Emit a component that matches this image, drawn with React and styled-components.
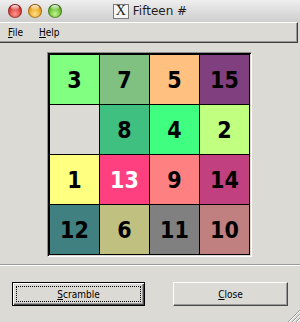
import React from 'react';
import styled, { createGlobalStyle } from 'styled-components';

const GlobalStyle = createGlobalStyle`
  html, body {
    margin: 0;
    padding: 0;
    background: #dcdad5;
  }
  body {
    font-family: "DejaVu Sans", sans-serif;
  }
`;

const gtkFont = `
  font-family: "DejaVu Sans Condensed", "DejaVu Sans", sans-serif;
  font-stretch: condensed;
  font-size: 10px;
`;

const Window = styled.div`
  width: 300px;
  height: 322px;
  display: flex;
  flex-direction: column;
  background: #dcdad5;
  overflow: hidden;
`;

const TitleBar = styled.div`
  height: 22px;
  display: grid;
  grid-template-columns: 1fr auto 1fr;
  align-items: center;
  background: linear-gradient(#eeeeee, #dcdcdc 55%, #cfcfcf);
`;

const Lights = styled.div`
  display: flex;
  gap: 6px;
  padding-left: 8px;
`;

const Light = styled.span`
  width: 14px;
  height: 14px;
  border-radius: 50%;
  background: radial-gradient(circle at 50% 70%, ${(p) => p.$hi} 0, ${(p) => p.$c} 55%, ${(p) => p.$dark} 100%);
  box-shadow: inset 0 0 0 1px rgba(0, 0, 0, 0.3);
  position: relative;
  overflow: hidden;
  &::after {
    content: '';
    position: absolute;
    left: 3px;
    top: 1px;
    width: 8px;
    height: 5px;
    border-radius: 50%;
    background: linear-gradient(rgba(255, 255, 255, 0.9), rgba(255, 255, 255, 0.1));
  }
`;

const Title = styled.div`
  display: flex;
  align-items: center;
  gap: 4px;
  font-family: "DejaVu Sans", sans-serif;
  font-size: 12px;
  color: #1e1e1e;
`;

const XIcon = styled.span`
  width: 14px;
  height: 13px;
  border: 1px solid #7a7a7a;
  background: #f6f6f6;
  display: flex;
  align-items: center;
  justify-content: center;
  font-family: "Liberation Serif", serif;
  font-size: 14px;
  line-height: 1;
  color: #222;
`;

const MenuBar = styled.div`
  width: 298px;
  height: 21px;
  box-sizing: border-box;
  display: flex;
  align-items: center;
  border-top: 1px solid #ffffff;
  border-right: 1px solid #3c3c3c;
  border-bottom: 1px solid #3c3c3c;
  box-shadow: inset -1px -1px 0 #9a9a9a;
`;

const MenuItem = styled.span`
  ${gtkFont}
  padding: 0 8px;
  color: #000;
`;

const Mn = styled.span`
  text-decoration: underline;
`;

const Content = styled.div`
  display: flex;
  padding: 9px 0 7px 47px;
`;

const Frame = styled.div`
  border: 1px solid;
  border-color: #8e8e8e #ffffff #ffffff #8e8e8e;
  padding: 1px;
  box-shadow: inset 1px 1px 0 #000, inset -1px -1px 0 #dcdad5;
`;

const Board = styled.div`
  display: grid;
  grid-template-columns: repeat(4, 49px);
  grid-auto-rows: 49px;
  gap: 1px;
  padding: 1px;
  background: #000;
`;

const Tile = styled.div`
  background: ${(p) => p.$bg};
  color: ${(p) => (p.$light ? '#ffffff' : '#000000')};
  display: flex;
  align-items: center;
  justify-content: center;
  font-family: "DejaVu Sans Condensed", "DejaVu Sans", sans-serif;
  font-stretch: condensed;
  font-weight: bold;
  font-size: 23px;
`;

const Separator = styled.div`
  height: 1px;
  background: #9a9a9a;
  border-bottom: 1px solid #ffffff;
`;

const ButtonRow = styled.div`
  display: flex;
  justify-content: space-between;
  padding: 16px 12px 0;
`;

const Button = styled.button`
  ${gtkFont}
  width: ${(p) => p.$w}px;
  height: 24px;
  box-sizing: border-box;
  padding: 0;
  margin: 0;
  color: #000;
  background: #dcdad5;
  border: 1px solid;
  border-color: #ffffff #4a4a4a #4a4a4a #ffffff;
  box-shadow: inset -1px -1px 0 #9a9a9a;
  border-radius: 0;
`;

const DefaultButton = styled(Button)`
  border: 1px solid #000;
  box-shadow: inset 1px 1px 0 #ffffff, inset -1px -1px 0 #4a4a4a, inset -2px -2px 0 #9a9a9a;
  outline: 1px dotted #000;
  outline-offset: -5px;
`;

const GripRow = styled.div`
  margin-top: auto;
  display: flex;
  justify-content: flex-end;
`;

const tiles = [
  { n: 3, bg: '#80ff80' },
  { n: 7, bg: '#80c080' },
  { n: 5, bg: '#ffc080' },
  { n: 15, bg: '#804080' },
  { n: null, bg: '#dcdad5' },
  { n: 8, bg: '#40c080' },
  { n: 4, bg: '#40ff80' },
  { n: 2, bg: '#c0ff80' },
  { n: 1, bg: '#ffff80' },
  { n: 13, bg: '#ff4080', light: true },
  { n: 9, bg: '#ff8080' },
  { n: 14, bg: '#c04080' },
  { n: 12, bg: '#408080' },
  { n: 6, bg: '#c0c080' },
  { n: 11, bg: '#808080' },
  { n: 10, bg: '#c08080' },
];

function Grip() {
  return (
    <svg width="14" height="14" viewBox="0 0 14 14">
      {[2, 6, 10].map((o) => (
        <g key={o}>
          <line x1={o} y1="14" x2="14" y2={o} stroke="#9a9a9a" strokeWidth="1" />
          <line x1={o + 1} y1="14" x2="14" y2={o + 1} stroke="#ffffff" strokeWidth="1" />
        </g>
      ))}
    </svg>
  );
}

export default function App() {
  return (
    <>
      <GlobalStyle />
      <Window>
        <TitleBar>
          <Lights>
            <Light $c="#d63b36" $hi="#ff9a8e" $dark="#8a1a16" />
            <Light $c="#e9a01c" $hi="#ffe08a" $dark="#9a5a08" />
            <Light $c="#62b62c" $hi="#c6f58e" $dark="#2e6a10" />
          </Lights>
          <Title>
            <XIcon>X</XIcon>
            Fifteen #
          </Title>
          <span />
        </TitleBar>
        <MenuBar>
          <MenuItem><Mn>F</Mn>ile</MenuItem>
          <MenuItem><Mn>H</Mn>elp</MenuItem>
        </MenuBar>
        <Content>
          <Frame>
            <Board>
              {tiles.map((t, i) => (
                <Tile key={i} $bg={t.bg} $light={t.light}>{t.n}</Tile>
              ))}
            </Board>
          </Frame>
        </Content>
        <Separator />
        <ButtonRow>
          <DefaultButton $w={133}><Mn>S</Mn>cramble</DefaultButton>
          <Button $w={115}><Mn>C</Mn>lose</Button>
        </ButtonRow>
        <GripRow>
          <Grip />
        </GripRow>
      </Window>
    </>
  );
}
